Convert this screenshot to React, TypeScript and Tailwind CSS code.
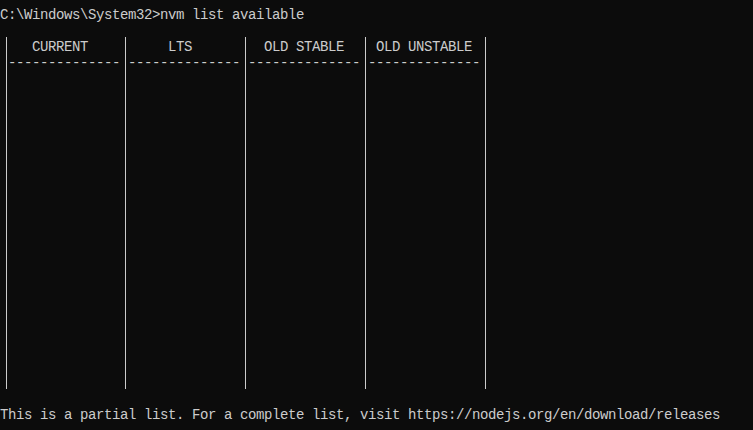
import React from "react";

const cols = [
  "   CURRENT    ",
  "     LTS      ",
  "  OLD STABLE  ",
  " OLD UNSTABLE ",
];

export default function App() {
  return (
    <div
      className="w-[753px] h-[430px] overflow-hidden bg-[#0c0c0c] text-[#cccccc] text-[14px] tracking-[-0.4px] leading-[16px] pt-[7px]"
      style={{ fontFamily: '"Liberation Mono", "DejaVu Sans Mono", monospace' }}
    >
      <div className="whitespace-pre h-[16px]">C:\Windows\System32&gt;nvm list available</div>
      <div className="h-[16px]" />
      <div className="-mt-[2px] h-[352px] flex pl-[6px]">
        {cols.map((c, i) => (
          <div
            key={i}
            className={
              "h-full border-l border-[#cccccc] pt-[2px] " +
              (i === 0 ? "w-[119px] pl-[1px]" : "w-[120px] pl-[2px]")
            }
          >
            <div className="whitespace-pre h-[16px]">{c}</div>
            <div className="whitespace-pre h-[16px]">--------------</div>
          </div>
        ))}
        <div className="h-full border-l border-[#cccccc]" />
      </div>
      <div className="mt-[18px] whitespace-pre h-[16px]">
        This is a partial list. For a complete list, visit https://nodejs.org/en/download/releases
      </div>
    </div>
  );
}
